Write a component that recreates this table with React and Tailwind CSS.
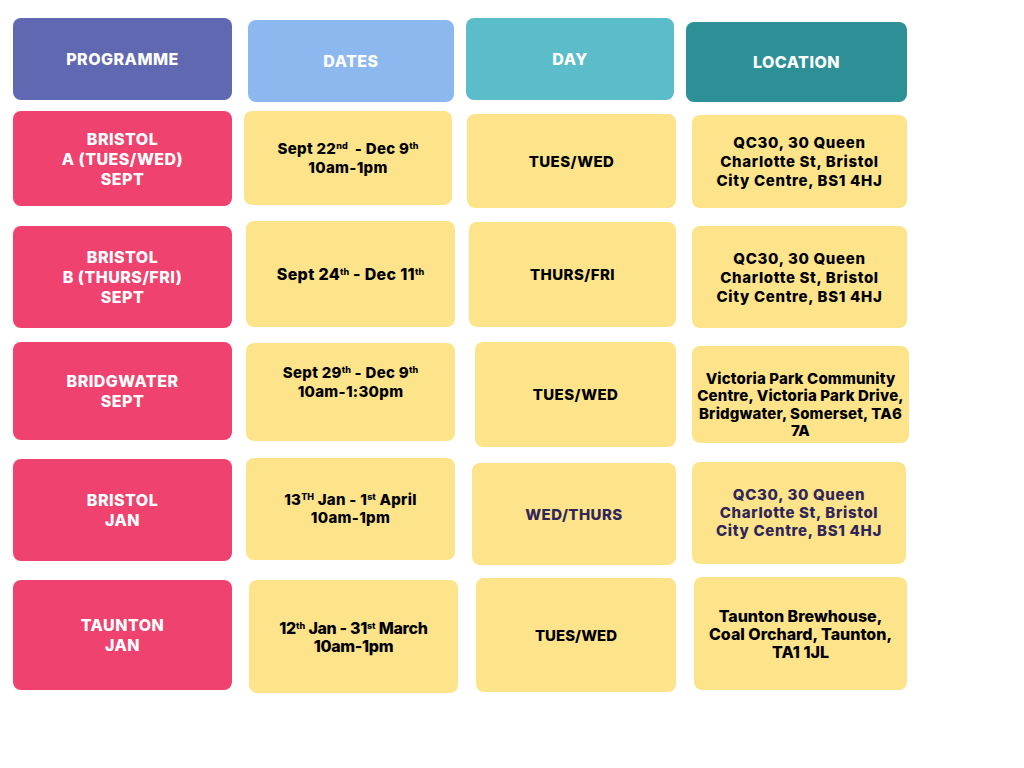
import React from 'react';

const head = 'text-white text-[16px] tracking-[0.03em]';
const pink = 'bg-[#ef426f] text-white text-[16px] leading-[20px] tracking-[0.03em]';
const yellow = 'bg-[#fde48a] text-[15px] leading-[19px]';

const Th = ({ children }) => <sup className="text-[9px] relative -top-[0.55em] align-baseline tracking-normal">{children}</sup>;

const rows = [
  {
    mt: 'mt-[18px]',
    cells: [
      { box: `ml-[13px] mt-0 w-[219px] h-[82px] bg-[#6068b1] ${head}`, body: 'PROGRAMME' },
      { box: `ml-[16px] mt-[2px] w-[206px] h-[82px] bg-[#8cb8ef] ${head}`, body: 'DATES' },
      { box: `ml-[12px] mt-0 w-[208px] h-[82px] bg-[#5bbdc9] ${head}`, body: 'DAY' },
      { box: `ml-[12px] mt-[4px] w-[221px] h-[80px] bg-[#2d9097] ${head}`, body: 'LOCATION' },
    ],
  },
  {
    mt: 'mt-[9px]',
    cells: [
      { box: `ml-[13px] mt-0 w-[219px] h-[95px] ${pink}`, body: <>BRISTOL<br />A (TUES/WED)<br />SEPT</> },
      { box: `ml-[12px] mt-0 w-[208px] h-[94px] ${yellow} text-black tracking-[0.02em]`, body: <>Sept 22<Th>nd</Th>&nbsp; - Dec 9<Th>th</Th><br />10am-1pm</> },
      { box: `ml-[15px] mt-[3px] w-[209px] h-[94px] ${yellow} text-black tracking-[0.03em]`, body: 'TUES/WED' },
      { box: `ml-[16px] mt-[4px] w-[215px] h-[93px] ${yellow} text-black tracking-[0.045em]`, body: <>QC30, 30 Queen<br />Charlotte St, Bristol<br />City Centre, BS1 4HJ</> },
    ],
  },
  {
    mt: 'mt-[13px]',
    cells: [
      { box: `ml-[13px] mt-[5px] w-[219px] h-[102px] ${pink}`, body: <>BRISTOL<br />B (THURS/FRI)<br />SEPT</> },
      { box: `ml-[14px] mt-0 w-[209px] h-[106px] bg-[#fde48a] text-black text-[16px] tracking-[0.02em]`, body: <>Sept 24<Th>th</Th> - Dec 11<Th>th</Th></> },
      { box: `ml-[14px] mt-[1px] w-[207px] h-[105px] ${yellow} text-black tracking-[0.03em]`, body: 'THURS/FRI' },
      { box: `ml-[16px] mt-[5px] w-[215px] h-[102px] ${yellow} text-black tracking-[0.045em]`, body: <>QC30, 30 Queen<br />Charlotte St, Bristol<br />City Centre, BS1 4HJ</> },
    ],
  },
  {
    mt: 'mt-[14px]',
    cells: [
      { box: `ml-[13px] mt-0 w-[219px] h-[98px] ${pink}`, body: <>BRIDGWATER<br />SEPT</> },
      { box: `ml-[14px] mt-[1px] w-[209px] h-[98px] pb-5 ${yellow} text-black tracking-[0.02em]`, body: <>Sept 29<Th>th</Th> - Dec 9<Th>th</Th><br />10am-1:30pm</> },
      { box: `ml-[20px] mt-0 w-[201px] h-[105px] ${yellow} text-black tracking-[0.03em]`, body: 'TUES/WED' },
      { box: `ml-[16px] mt-[4px] w-[217px] h-[97px] pt-5 bg-[#fde48a] text-black text-[15px] leading-[17.5px] tracking-[0.01em]`, body: <>Victoria Park Community<br />Centre, Victoria Park Drive,<br />Bridgwater, Somerset, TA6<br />7A</> },
    ],
  },
  {
    mt: 'mt-[11px]',
    cells: [
      { box: `ml-[13px] mt-[1px] w-[219px] h-[102px] ${pink}`, body: <>BRISTOL<br />JAN</> },
      { box: `ml-[14px] mt-0 w-[209px] h-[102px] bg-[#fde48a] text-black text-[15px] leading-[18px] tracking-[0.02em]`, body: <>13<Th>TH</Th> Jan - 1<Th>st</Th> April<br />10am-1pm</> },
      { box: `ml-[17px] mt-[5px] w-[204px] h-[102px] ${yellow} text-[#2f2558] tracking-[0.03em]`, body: 'WED/THURS' },
      { box: `ml-[16px] mt-[4px] w-[214px] h-[102px] bg-[#fde48a] text-[#2f2558] text-[15px] leading-[18px] tracking-[0.045em]`, body: <>QC30, 30 Queen<br />Charlotte St, Bristol<br />City Centre, BS1 4HJ</> },
    ],
  },
  {
    mt: 'mt-[12px]',
    cells: [
      { box: `ml-[13px] mt-[3px] w-[219px] h-[110px] ${pink}`, body: <>TAUNTON<br />JAN</> },
      { box: `ml-[17px] mt-[3px] w-[209px] h-[113px] bg-[#fde48a] text-black text-[16px] leading-[18px] tracking-[-0.02em]`, body: <>12<Th>th</Th> Jan - 31<Th>st</Th> March<br />10am-1pm</> },
      { box: `ml-[18px] mt-[1px] w-[200px] h-[114px] ${yellow} text-black tracking-normal`, body: 'TUES/WED' },
      { box: `ml-[18px] mt-0 w-[213px] h-[113px] bg-[#fde48a] text-black text-[16px] leading-[18px] tracking-normal`, body: <>Taunton Brewhouse,<br />Coal Orchard, Taunton,<br />TA1 1JL</> },
    ],
  },
];

export default function App() {
  return (
    <div className="w-[1024px] h-[768px] bg-white font-['Inter','Noto_Sans',sans-serif] font-extrabold overflow-hidden flex flex-col">
      {rows.map((row, i) => (
        <div key={i} className={`flex items-start ${row.mt}`}>
          {row.cells.map((cell, j) => (
            <div
              key={j}
              className={`shrink-0 rounded-lg flex items-center justify-center text-center whitespace-nowrap ${cell.box}`}
            >
              <div>{cell.body}</div>
            </div>
          ))}
        </div>
      ))}
    </div>
  );
}
